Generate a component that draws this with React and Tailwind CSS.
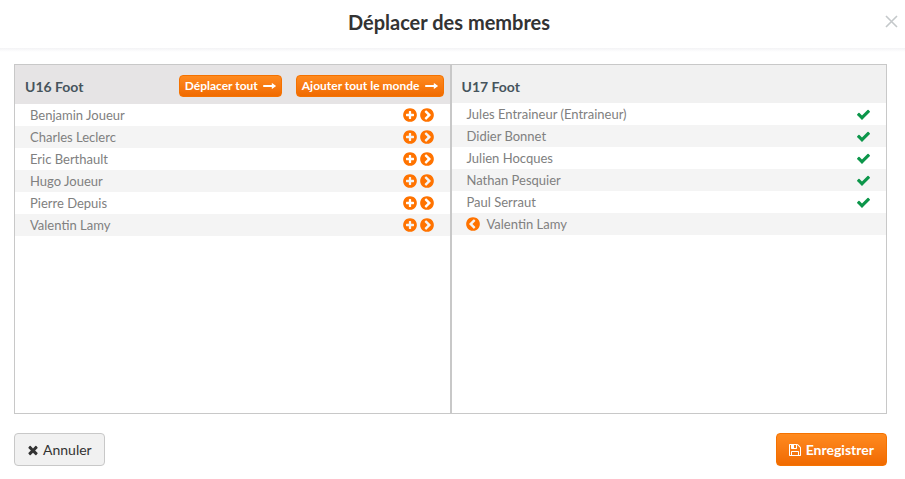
import React, { useState } from 'react';

const icons = {
  plus: 'M1344 960v-128q0-26-19-45t-45-19h-256v-256q0-26-19-45t-45-19h-128q-26 0-45 19t-19 45v256h-256q-26 0-45 19t-19 45v128q0 26 19 45t45 19h256v256q0 26 19 45t45 19h128q26 0 45-19t19-45v-256h256q26 0 45-19t19-45zm320-64q0 209-103 385.5t-279.5 279.5-385.5 103-385.5-103-279.5-279.5-103-385.5 103-385.5 279.5-279.5 385.5-103 385.5 103 279.5 279.5 103 385.5z',
  chevron: 'M845 1395l454-454q19-19 19-45t-19-45l-454-454q-19-19-45-19t-45 19l-102 102q-19 19-19 45t19 45l307 307-307 307q-19 19-19 45t19 45l102 102q19 19 45 19t45-19zm819-499q0 209-103 385.5t-279.5 279.5-385.5 103-385.5-103-279.5-279.5-103-385.5 103-385.5 279.5-279.5 385.5-103 385.5 103 279.5 279.5 103 385.5z',
  check: 'M1671 566q0 40-28 68l-724 724-136 136q-28 28-68 28t-68-28l-136-136-362-362q-28-28-28-68t28-68l136-136q28-28 68-28t68 28l294 295 656-657q28-28 68-28t68 28l136 136q28 28 28 68z',
  times: 'M1490 1322q0 40-28 68l-136 136q-28 28-68 28t-68-28l-294-294-294 294q-28 28-68 28t-68-28l-136-136q-28-28-28-68t28-68l294-294-294-294q-28-28-28-68t28-68l136-136q28-28 68-28t68 28l294 294 294-294q28-28 68-28t68 28l136 136q28 28 28 68t-28 68l-294 294 294 294q28 28 28 68z',
  save: 'M512 1536h768v-384h-768v384zm896 0h128v-896q0-14-10-38.5t-20-34.5l-281-281q-10-10-34-20t-39-10v416q0 40-28 68t-68 28h-576q-40 0-68-28t-28-68v-416h-128v1280h128v-416q0-40 28-68t68-28h832q40 0 68 28t28 68v416zm-384-928v-320q0-13-9.5-22.5t-22.5-9.5h-192q-13 0-22.5 9.5t-9.5 22.5v320q0 13 9.5 22.5t22.5 9.5h192q13 0 22.5-9.5t9.5-22.5zm640 32v928q0 40-28 68t-68 28h-1344q-40 0-68-28t-28-68v-1344q0-40 28-68t68-28h928q40 0 88 20t76 48l280 280q28 28 48 76t20 88z',
};

const Icon = ({ name, className }) => (
  <svg viewBox="0 0 1792 1792" fill="currentColor" aria-hidden="true" className={className}>
    <path d={icons[name]} />
  </svg>
);

const LongArrow = () => (
  <svg viewBox="0 0 13 12" fill="currentColor" aria-hidden="true" className="h-3 w-[13px]">
    <path d="M.5 5h8.3V3.4q0-.6.5-.2L12.8 5.700q.3.3 0 .6L9.300 8.800q-.5.4-.5-.2V7H.5Q.2 7 .2 6.700V5.300Q.2 5 .5 5z" />
  </svg>
);

const SmallButton = ({ children, onClick }) => (
  <button
    type="button"
    onClick={onClick}
    className="flex h-[22px] items-center gap-[5px] rounded border border-[#f57200] bg-linear-to-b from-[#ff8a1e] to-[#f06a00] px-[5px] text-xs font-bold text-white"
  >
    {children}
    <LongArrow />
  </button>
);

const Row = ({ children }) => (
  <li className="flex h-[22px] items-center px-[15px] text-[13px] text-[#808080] even:bg-[#f4f4f4]">
    {children}
  </li>
);

const sourceMembers = [
  'Benjamin Joueur',
  'Charles Leclerc',
  'Eric Berthault',
  'Hugo Joueur',
  'Pierre Depuis',
  'Valentin Lamy',
];

const targetMembers = [
  { name: 'Jules Entraineur (Entraineur)' },
  { name: 'Didier Bonnet' },
  { name: 'Julien Hocques' },
  { name: 'Nathan Pesquier' },
  { name: 'Paul Serraut' },
  { name: 'Valentin Lamy', added: true },
];

const App = () => {
  const [source, setSource] = useState(sourceMembers);
  const [target, setTarget] = useState(targetMembers);

  // Copy members to the target team
  const addMembers = (names) => {
    const missing = names.filter((name) => !target.some((m) => m.name === name));
    setTarget([...target, ...missing.map((name) => ({ name, added: true }))]);
  };

  // Move members: copy them, then drop them from the source team
  const moveMembers = (names) => {
    addMembers(names);
    setSource(source.filter((name) => !names.includes(name)));
  };

  // Send a member back to the source team
  const undo = (name) => {
    setTarget(target.filter((m) => m.name !== name));
    if (!source.includes(name)) setSource([...source, name]);
  };

  return (
    <div className="min-h-screen bg-white font-['Lato',sans-serif]">
      <header className="grid h-12 grid-cols-[1fr_auto_1fr] items-center pr-[7px] pb-[5px]">
        <h1 className="col-start-2 text-xl font-bold text-[#333]">Déplacer des membres</h1>
        <button type="button" aria-label="Fermer" className="justify-self-end text-[#c4c8ca]">
          <svg viewBox="0 0 13 13" fill="none" stroke="currentColor" strokeWidth="1.6" className="size-[13px]">
            <path d="M1 1l11 11M12 1L1 12" />
          </svg>
        </button>
      </header>
      <div className="h-1 bg-linear-to-b from-[#f3f3f5] to-white" />

      <main className="pt-3 pr-[18px] pb-3 pl-[14px]">
        <div className="grid min-h-[350px] grid-cols-2">
          <section className="border border-[#c8c8c8]">
            <div className="flex h-[39px] items-center bg-[#e6e4e5] pt-[3px] pr-1.5 pl-2.5">
              <h2 className="flex-1 pt-0.5 text-sm font-bold text-[#46545c]">U16 Foot</h2>
              <div className="flex gap-3.5">
                <SmallButton onClick={() => moveMembers(source)}>Déplacer tout</SmallButton>
                <SmallButton onClick={() => addMembers(source)}>Ajouter tout le monde</SmallButton>
              </div>
            </div>
            <ul>
              {source.map((name) => (
                <Row key={name}>
                  <span className="flex-1 pt-0.5">{name}</span>
                  <span className="flex gap-px text-[#ff7300]">
                    <button type="button" aria-label={`Ajouter ${name}`} onClick={() => addMembers([name])}>
                      <Icon name="plus" className="size-4" />
                    </button>
                    <button type="button" aria-label={`Déplacer ${name}`} onClick={() => moveMembers([name])}>
                      <Icon name="chevron" className="size-4" />
                    </button>
                  </span>
                </Row>
              ))}
            </ul>
          </section>

          <section className="border border-[#c8c8c8]">
            <div className="flex h-[38px] items-center bg-[#f1f1f1] pt-1.5 pl-2.5">
              <h2 className="text-sm font-bold text-[#46545c]">U17 Foot</h2>
            </div>
            <ul>
              {target.map(({ name, added }) => (
                <Row key={name}>
                  {added && (
                    <button
                      type="button"
                      aria-label={`Annuler ${name}`}
                      onClick={() => undo(name)}
                      className="mr-1.5 -ml-0.5 text-[#ff7300]"
                    >
                      <Icon name="chevron" className="size-4 rotate-180" />
                    </button>
                  )}
                  <span className="flex-1 pt-0.5">{name}</span>
                  {!added && <Icon name="check" className="size-[15px] text-[#0c964a]" />}
                </Row>
              ))}
            </ul>
          </section>
        </div>

        <footer className="flex justify-between pt-[19px]">
          <button
            type="button"
            className="flex h-[33px] items-center gap-[3px] rounded border border-[#c8c8c8] bg-[#f1f1f1] pr-3 pl-[11px] text-sm text-[#333]"
          >
            <Icon name="times" className="size-[14px]" />
            Annuler
          </button>
          <button
            type="button"
            className="flex h-[33px] items-center gap-1 rounded border border-[#f57200] bg-linear-to-b from-[#ff8a1e] to-[#f06a00] pr-3 pl-[11px] text-sm font-bold text-white"
          >
            <Icon name="save" className="size-[14px]" />
            Enregistrer
          </button>
        </footer>
      </main>
    </div>
  );
};

export default App;
